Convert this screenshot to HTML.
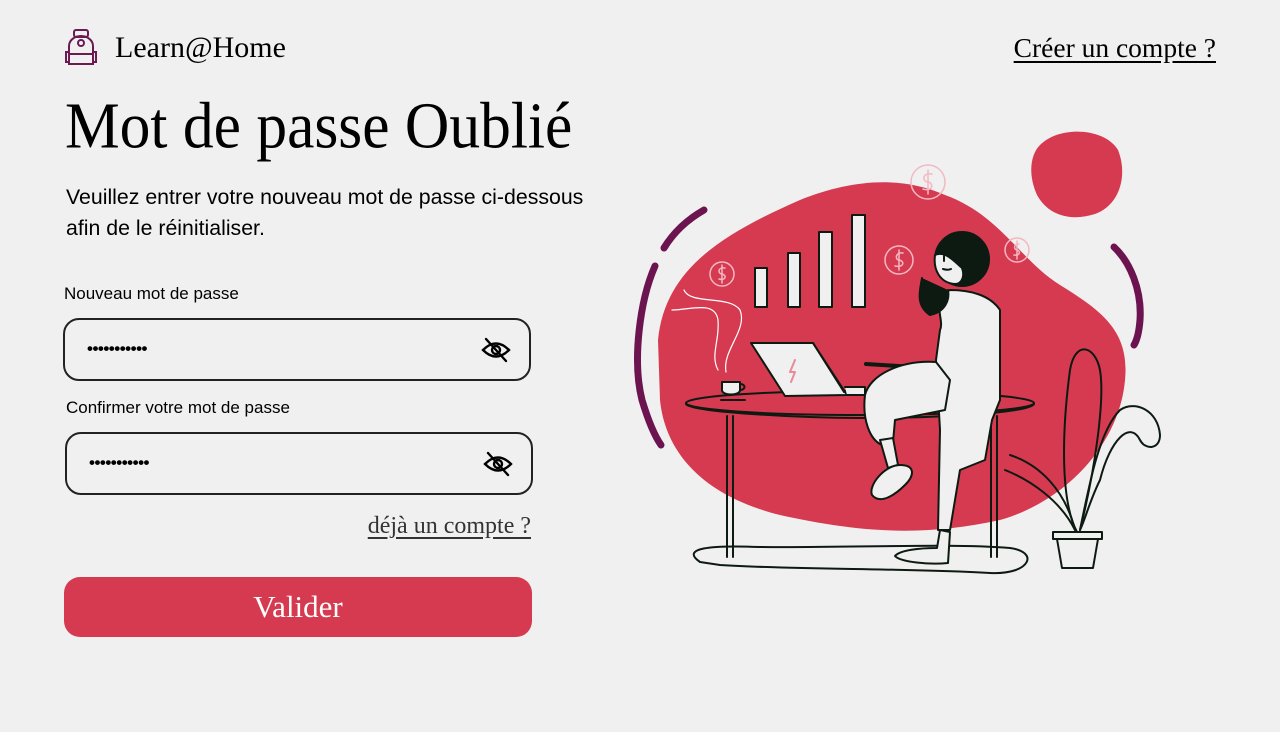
<!DOCTYPE html>
<html><head><meta charset="utf-8"><style>
*{margin:0;padding:0;box-sizing:border-box}
body{width:1280px;height:732px;background:#f0f0f0;position:relative;overflow:hidden;font-family:"Liberation Sans",sans-serif;color:#000}
.a{position:absolute;white-space:nowrap}
.serif{font-family:"Liberation Serif",serif}
.inp{position:absolute;border:2px solid #222;border-radius:16px;height:63px;width:468px}
.dots{position:absolute;left:22px;top:19px;font-size:17px;letter-spacing:-0.5px;font-weight:bold}
.eye{position:absolute;right:18px;top:17px}
</style></head><body>
<svg class="a" style="left:62px;top:28px" width="38" height="40" viewBox="0 0 38 40" fill="none" stroke="#6b1a52" stroke-width="2">
<rect x="12" y="2" width="14" height="7" rx="2"/>
<path d="M7 36 V18 a12 10 0 0 1 24 0 V36 Z"/>
<circle cx="19" cy="15" r="3"/>
<path d="M7 26 h24"/><path d="M7 24 h-3 v10 h3 M31 24 h3 v10 h-3"/>
</svg>
<div class="a serif" style="left:115px;top:31px;font-size:30px">Learn@Home</div>
<div class="a serif" style="right:64px;top:32px;font-size:27.5px;text-decoration:underline;text-underline-offset:4px">Créer un compte ?</div>
<div class="a serif" style="left:65px;top:89px;font-size:61.5px;transform:scaleY(1.06);transform-origin:top left">Mot de passe Oublié</div>
<div class="a" style="left:66px;top:182px;font-size:21.3px;line-height:31px">Veuillez entrer votre nouveau mot de passe ci-dessous<br>afin de le réinitialiser.</div>
<div class="a" style="left:64px;top:284px;font-size:17px">Nouveau mot de passe</div>
<div class="inp" style="left:63px;top:318px"><div class="dots">•••••••••••</div>
<svg class="eye" width="30" height="26" viewBox="0 0 30 26" fill="none" stroke="#000" stroke-width="2.4" stroke-linecap="round"><path d="M2 13 Q15 0 28 13 Q15 26 2 13Z"/><circle cx="15" cy="13" r="4"/><path d="M5 2 L25 24"/></svg></div>
<div class="a" style="left:66px;top:398px;font-size:17px">Confirmer votre mot de passe</div>
<div class="inp" style="left:65px;top:432px"><div class="dots">•••••••••••</div>
<svg class="eye" width="30" height="26" viewBox="0 0 30 26" fill="none" stroke="#000" stroke-width="2.4" stroke-linecap="round"><path d="M2 13 Q15 0 28 13 Q15 26 2 13Z"/><circle cx="15" cy="13" r="4"/><path d="M5 2 L25 24"/></svg></div>
<div class="a serif" style="right:749px;top:513px;font-size:24px;color:#333;text-decoration:underline;text-underline-offset:4px">déjà un compte ?</div>
<div class="a serif" style="left:64px;top:577px;width:468px;height:60px;background:#d63a50;border-radius:16px;color:#fff;font-size:31px;text-align:center;line-height:60px">Valider</div>

<svg class="a" style="left:0;top:0" width="1280" height="732" viewBox="0 0 1280 732" fill="none" stroke="#0d1a12" stroke-width="2" stroke-linecap="round" stroke-linejoin="round">
<path d="M658 340 C665 270 720 235 800 200 C850 180 900 175 945 195 C1000 215 1020 260 1060 285 C1100 310 1130 330 1125 380 C1120 440 1070 500 1000 520 C930 535 870 535 780 515 C700 495 665 450 660 400 Z" fill="#d63a50" stroke="none"/>
<path d="M1040 145 C1060 125 1105 128 1118 150 C1128 175 1120 205 1095 214 C1070 222 1048 215 1037 195 C1028 175 1030 155 1040 145Z" fill="#d63a50" stroke="none"/>
<g stroke="#6b1450" stroke-width="7" fill="none">
<path d="M655 266 C640 300 632 360 642 400 C648 420 654 435 661 445"/>
<path d="M664 248 C675 230 690 218 704 210"/>
<path d="M1114 247 C1130 262 1142 290 1140 320 C1139 333 1137 340 1134 345"/>
</g>
<g stroke="#f4b8c2" stroke-width="1.5">
<circle cx="928" cy="182" r="17"/><path d="M932 174 C922 172 922 182 928 182 C934 183 933 192 923 189 M928 170 V194"/>
<circle cx="722" cy="274" r="12"/><path d="M725 268 C717 267 718 274 722 274 C727 275 726 281 719 279 M722 265 V283"/>
<circle cx="899" cy="260" r="14"/><path d="M903 253 C895 252 895 260 899 260 C905 261 904 268 895 266 M899 250 V270"/>
<circle cx="1017" cy="250" r="12"/><path d="M1019 244 C1013 244 1014 250 1017 250 C1021 251 1020 256 1014 255 M1017 241 V259"/>
</g>
<g fill="#f0f0f0">
<rect x="755" y="268" width="12" height="39"/><rect x="788" y="253" width="12" height="54"/><rect x="819" y="232" width="13" height="75"/><rect x="852" y="215" width="13" height="92"/>
</g>
<path d="M684 290 C690 305 730 295 740 310 C748 330 722 350 726 372" stroke="#fff" stroke-width="1.2"/>
<path d="M672 310 C690 310 715 300 718 320 C720 340 710 355 718 370" stroke="#fff" stroke-width="1.2"/>
<path d="M700 562 C680 548 710 545 760 547 C850 548 950 543 1010 548 C1040 552 1030 575 990 573 C900 568 800 570 720 565Z" fill="#f0f0f0"/>
<ellipse cx="860" cy="403" rx="174" ry="12" fill="#d63a50"/>
<path d="M686 404 C690 412 800 418 860 418 C950 418 1030 412 1034 404"/>
<path d="M727 416 V557 M733 416 V557 M991 416 V557 M997 416 V557"/>
<path d="M722 382 h18 v8 c0 6-18 6-18 0z" fill="#f0f0f0"/><path d="M740 384 c6 0 6 6 0 6"/><path d="M721 400 h24"/>
<path d="M751 343 L813 343 L847 395 L785 396 Z" fill="#f0f0f0"/>
<path d="M813 343 L844 392" /><path d="M845 387 h20 v8 h-18" fill="#f0f0f0"/>
<path d="M795 360 l-5 12 h5 l-4 10" stroke="#e88a9a" stroke-width="2"/>
<path d="M866 364 L930 368" stroke-width="4"/>
<path d="M950 290 C930 300 945 320 940 330 L936 360 L940 430 L938 530 L950 530 L960 470 L985 460 L992 420 L1000 400 L1000 310 C990 295 970 290 950 290Z" fill="#f0f0f0"/>
<path d="M936 362 C900 360 870 375 865 395 C862 420 870 440 882 445 L893 442 L895 420 L945 410 L950 380Z" fill="#f0f0f0"/>
<path d="M880 440 L888 468 L898 465 L893 438Z" fill="#f0f0f0"/>
<path d="M872 495 C868 485 885 465 900 465 C915 465 915 475 905 485 C895 495 880 505 872 495Z" fill="#f0f0f0"/>
<path d="M940 530 L937 548 C920 548 900 550 895 556 C900 562 930 565 948 563 L950 532Z" fill="#f0f0f0"/>
<path d="M922 278 C920 290 915 305 930 315 C945 312 950 300 948 290" fill="#0d1a12"/>
<circle cx="962" cy="259" r="27" fill="#0d1a12"/>
<path d="M935 255 C933 270 940 283 955 284 C962 284 965 276 962 268 C955 262 945 250 935 255Z" fill="#f0f0f0"/>
<path d="M944 256 v5 M943 269 c3 1 6 1 8 0"/>
<path d="M1077 532 C1060 500 1062 430 1070 370 C1075 340 1095 345 1100 370 C1105 400 1095 470 1080 530" />
<path d="M1080 530 C1090 480 1100 430 1120 410 C1135 400 1158 410 1160 435 C1160 450 1145 450 1140 440 C1130 420 1110 440 1100 480 C1090 500 1085 520 1080 530"/>
<path d="M1075 530 C1065 490 1040 465 1010 455 M1075 530 C1060 500 1030 480 1005 470"/>
<path d="M1053 532 h49 v7 h-49z M1057 539 L1062 568 H1093 L1098 539" fill="#f0f0f0"/>
</svg>
</body></html>
